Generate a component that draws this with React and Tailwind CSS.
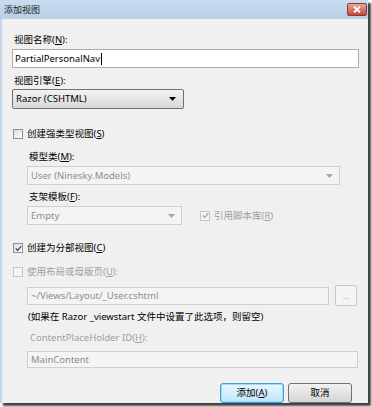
import React from 'react';

const font = "font-['Noto_Sans','Noto_Sans_CJK_SC',sans-serif]";

const Key = ({ k }) => (
  <>(<span className="underline">{k}</span>)</>
);

const Check = ({ checked, disabled }) => (
  <span
    className={
      'flex h-[10px] w-[10px] items-center justify-center border ' +
      (disabled
        ? 'border-[#c6c6c6] bg-[#f4f4f4]'
        : 'border-[#8e8f8f] bg-gradient-to-br from-[#dcdcdc] to-[#ffffff]')
    }
  >
    {checked && (
      <svg width="7" height="7" viewBox="0 0 9 9">
        <path
          d="M1 4.5 L3.5 7 L8 1.5"
          fill="none"
          stroke={disabled ? '#a8a8a8' : '#3c4d6a'}
          strokeWidth="1.8"
        />
      </svg>
    )}
  </span>
);

const Arrow = ({ color = '#000' }) => (
  <svg width="7" height="4" viewBox="0 0 7 4">
    <path d="M0 0 H7 L3.5 4 Z" fill={color} />
  </svg>
);

const DisabledSelect = ({ text, width }) => (
  <div className={`flex h-[19px] items-center justify-between border border-[#cfcfcf] bg-[#f4f4f4] pl-[3px] pr-[6px] text-[#8d8d8d] ${width}`}>
    <span>{text}</span>
    <Arrow color="#a5a5a5" />
  </div>
);

export default function App() {
  return (
    <div className={`relative h-[407px] w-[372px] bg-white text-[9.5px] leading-[16px] text-black ${font}`}>
      <div className="flex h-[403px] w-[368px] flex-col bg-[#f0f0f0] shadow-[3px_3px_2px_rgba(0,0,0,0.75)]">
        {/* title bar */}
        <div className="flex h-[19px] shrink-0 items-center justify-between bg-gradient-to-b from-[#c9dcf0] to-[#b9cfe7] pl-[4px] pr-[1px]">
          <span className="text-[9px] text-[#1b1b1b]">添加视图</span>
          <div className="flex h-[13px] w-[20px] items-center justify-center rounded-[2px] border border-[#8a3a32] bg-gradient-to-b from-[#e7a597] to-[#c4473a]">
            <svg width="8" height="7" viewBox="0 0 8 7">
              <path d="M1 0.5 L7 6.5 M7 0.5 L1 6.5" stroke="#fff" strokeWidth="1.8" />
            </svg>
          </div>
        </div>

        <div className="flex flex-1 border-l-2 border-[#c3d6ec]">
          <div className="flex flex-1 flex-col pl-[10px] pr-[9px]">
            <div className="mt-[13px] pl-[2px]">视图名称<Key k="N" />:</div>
            <div className="mt-[1px] flex h-[19px] items-center border border-[#abadb3] bg-white pl-[2px]">
              PartialPersonalNav<span className="ml-[1px] h-[12px] w-px bg-black" />
            </div>

            <div className="mt-[5px] pl-[2px]">视图引擎<Key k="E" />:</div>
            <div className="flex h-[20px] w-[172px] items-center justify-between rounded-[2px] border border-[#707070] bg-gradient-to-b from-[#f2f2f2] to-[#d9d9d9] pl-[3px] pr-[7px]">
              <span>Razor (CSHTML)</span>
              <Arrow />
            </div>

            <div className="mt-[17px] flex items-center gap-[4px] pl-[1px]">
              <Check />
              <span>创建强类型视图<Key k="S" /></span>
            </div>

            <div className="flex flex-col pl-[15px]">
              <div className="mt-[7px] pl-[2px]">模型类<Key k="M" />:</div>
              <div className="mt-[1px]">
                <DisabledSelect text="User (Ninesky.Models)" width="w-[313px]" />
              </div>
              <div className="mt-[4px] pl-[2px]">支架模板<Key k="F" />:</div>
              <div className="mt-[1px] flex items-center">
                <DisabledSelect text="Empty" width="w-[155px]" />
                <div className="ml-[18px] flex items-center gap-[4px] text-[#a0a0a0]">
                  <Check checked disabled />
                  <span>引用脚本库<Key k="R" /></span>
                </div>
              </div>
            </div>

            <div className="mt-[15px] flex items-center gap-[4px] pl-[1px]">
              <Check checked />
              <span>创建为分部视图<Key k="C" /></span>
            </div>

            <div className="mt-[8px] flex items-center gap-[4px] pl-[1px] text-[#a0a0a0]">
              <Check disabled />
              <span>使用布局或母版页<Key k="U" />:</span>
            </div>

            <div className="flex flex-col pl-[15px]">
              <div className="mt-[5px] flex items-center gap-[6px]">
                <div className="flex h-[18px] w-[302px] items-center border border-[#cfcfcf] bg-[#f4f4f4] pl-[3px] text-[#8d8d8d]">
                  ~/Views/Layout/_User.cshtml
                </div>
                <div className="flex h-[21px] w-[22px] items-center justify-center rounded-[2px] border border-[#c8c8c8] bg-[#f4f4f4] text-[8px] text-[#a8a8a8]">
                  ...
                </div>
              </div>
              <div className="mt-[3px] pl-[1px]">(如果在 Razor _viewstart 文件中设置了此选项，则留空)</div>
              <div className="mt-[5px] pl-[3px] text-[#a0a0a0]">ContentPlaceHolder ID<Key k="H" />:</div>
              <div className="mt-[5px] flex h-[17px] w-[331px] items-center border border-[#cfcfcf] bg-[#f4f4f4] pl-[3px] text-[#8d8d8d]">
                MainContent
              </div>
            </div>

            <div className="mt-[15px] flex justify-end gap-[4px] pr-[7px]">
              <button className="flex h-[20px] w-[64px] items-center justify-center rounded-[3px] border border-[#3c9fd8] bg-gradient-to-b from-[#eaf6fd] to-[#bee6fd] shadow-[inset_0_0_0_1px_#9edbff]">
                添加<Key k="A" />
              </button>
              <button className="flex h-[20px] w-[64px] items-center justify-center rounded-[3px] border border-[#707070] bg-gradient-to-b from-[#f2f2f2] to-[#d5d5d5]">
                取消
              </button>
            </div>
          </div>
        </div>
      </div>
    </div>
  );
}
